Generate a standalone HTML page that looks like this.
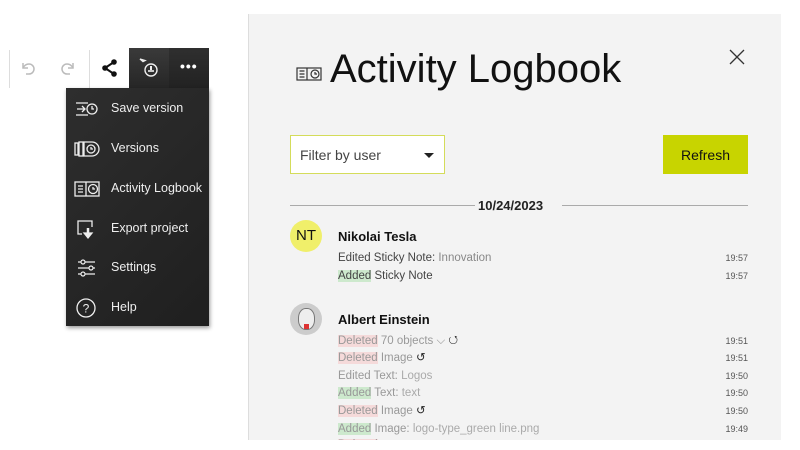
<!DOCTYPE html>
<html><head><meta charset="utf-8"><style>
*{margin:0;padding:0;box-sizing:border-box}
body{width:800px;height:450px;background:#fff;position:relative;overflow:hidden;font-family:"Liberation Sans",sans-serif}
.abs{position:absolute}
.sep{position:absolute;width:1px;background:#ddd}
.dark{position:absolute;background:linear-gradient(#3a3a3a,#262626)}
.menu{position:absolute;left:66px;top:88px;width:143px;height:238px;background:linear-gradient(135deg,#2e2e2e,#1f1f1f);box-shadow:1px 2px 4px rgba(0,0,0,.4)}
.mi{position:absolute;left:45px;color:#eee;font-size:12.5px;line-height:14px}
.ic{position:absolute;left:8px}
.panel{position:absolute;left:248px;top:14px;width:533px;height:426px;background:#f3f3f3;border-left:1px solid #ddd;overflow:hidden}
.t{position:absolute;font-size:11.5px;color:#444;white-space:nowrap;line-height:15px}
.ts{position:absolute;right:33px;font-size:9px;color:#555}
.g{background:#cde9cd}.r{background:#f5dada}
.fd{color:#999}.fd .k{color:#aaa}
</style></head><body>
<div class="sep" style="left:9px;top:50px;height:38px"></div>
<div class="sep" style="left:89px;top:50px;height:38px"></div>
<svg class="abs" style="left:18px;top:58px" width="20" height="20" viewBox="0 0 20 20" fill="none" stroke="#bbb" stroke-width="1.5"><path d="M5 5v5h5"/><path d="M5 10c1.5-3 4-4 6-4a5 5 0 0 1 0 10H8"/></svg>
<svg class="abs" style="left:58px;top:58px" width="20" height="20" viewBox="0 0 20 20" fill="none" stroke="#bbb" stroke-width="1.5"><path d="M15 5v5h-5"/><path d="M15 10c-1.5-3-4-4-6-4a5 5 0 0 0 0 10h3"/></svg>
<svg class="abs" style="left:100px;top:58px" width="20" height="20" viewBox="0 0 20 20"><path d="M14 4L5 10l9 6" stroke="#111" stroke-width="2" fill="none"/><circle cx="14" cy="4" r="2.8" fill="#111"/><circle cx="5" cy="10" r="2.8" fill="#111"/><circle cx="14" cy="16" r="2.8" fill="#111"/></svg>
<div class="dark" style="left:129px;top:48px;width:40px;height:40px"></div>
<div class="dark" style="left:169px;top:48px;width:40px;height:40px;background:linear-gradient(#2f2f2f,#222)"></div>
<svg class="abs" style="left:137px;top:56px" width="24" height="24" viewBox="0 0 24 24" fill="none" stroke="#eee" stroke-width="1.4"><path d="M3 3l5 1.5-2 1z" fill="#eee"/><circle cx="14" cy="14" r="6"/><path d="M14 10v4" stroke-width="2"/><path d="M11 15h6" stroke-width="1.6"/></svg>
<div class="abs" style="left:180px;top:58px;color:#fff;font-size:14px;font-weight:bold;letter-spacing:1px">•••</div>
<div class="menu">
 <svg class="ic" style="top:11px" width="26" height="20" viewBox="0 0 26 20" fill="none" stroke="#eee" stroke-width="1.3"><path d="M2 4h12M2 16h12"/><path d="M3 10h8M8 7l3 3-3 3"/><circle cx="18" cy="10" r="5"/><path d="M18 7v3h2"/></svg>
 <div class="mi" style="top:13px">Save version</div>
 <svg class="ic" style="top:51px" width="26" height="20" viewBox="0 0 26 20" fill="none" stroke="#eee" stroke-width="1.3"><rect x="1" y="4" width="3" height="12"/><rect x="5" y="3" width="4" height="14"/><path d="M10 3h8a6 6 0 0 1 0 14h-8z"/><circle cx="17" cy="10" r="4"/><path d="M17 8v2h2"/></svg>
 <div class="mi" style="top:53px">Versions</div>
 <svg class="ic" style="top:91px" width="28" height="20" viewBox="0 0 28 20" fill="none" stroke="#eee" stroke-width="1.3"><rect x="1" y="3" width="24" height="14"/><path d="M4 7h5M4 10h5M4 13h5M12 3v14"/><circle cx="19" cy="10" r="4.5"/><path d="M19 8v2h2"/></svg>
 <div class="mi" style="top:93px">Activity Logbook</div>
 <svg class="ic" style="top:130px" width="26" height="22" viewBox="0 0 26 22" fill="none" stroke="#eee" stroke-width="1.3"><path d="M8 16H4V3h14v6"/><path d="M14 10v8" stroke-width="2.5"/><path d="M10 15l4 5 4-5z" fill="#eee"/></svg>
 <div class="mi" style="top:133px">Export project</div>
 <svg class="ic" style="top:169px" width="26" height="22" viewBox="0 0 26 22" fill="none" stroke="#eee" stroke-width="1.2"><path d="M4 5h3M11 5h10M4 11h11M19 11h2M4 17h3M11 17h10"/><circle cx="9" cy="5" r="2"/><circle cx="17" cy="11" r="2"/><circle cx="9" cy="17" r="2"/></svg>
 <div class="mi" style="top:172px">Settings</div>
 <svg class="ic" style="top:208px" width="26" height="24" viewBox="0 0 26 24" fill="none" stroke="#eee" stroke-width="1.3"><circle cx="12" cy="12" r="9"/><text x="12" y="16.5" text-anchor="middle" fill="#eee" stroke="none" font-size="12" font-family="Liberation Sans">?</text></svg>
 <div class="mi" style="top:212px">Help</div>
</div>
<div class="panel">
 <svg class="abs" style="left:47px;top:52px" width="28" height="16" viewBox="0 0 28 16" fill="none" stroke="#333" stroke-width="1.2"><rect x="1" y="2" width="24" height="12"/><path d="M3.5 5h5M3.5 8h5M3.5 11h5M11 2v12"/><circle cx="19" cy="8" r="4"/><path d="M19 6v2h2"/></svg>
 <div class="abs" style="left:81px;top:33px;font-size:40px;color:#111">Activity Logbook</div>
 <svg class="abs" style="left:480px;top:35px" width="16" height="16" viewBox="0 0 16 16" stroke="#333" stroke-width="1.3"><path d="M1 1l14 14M15 1L1 15"/></svg>
 <div class="abs" style="left:41px;top:121px;width:155px;height:39px;background:#fff;border:1px solid #d4dc5a"></div>
 <div class="abs" style="left:51px;top:133px;font-size:14px;color:#444">Filter by user</div>
 <div class="abs" style="left:175px;top:139px;border-left:5px solid transparent;border-right:5px solid transparent;border-top:5px solid #222"></div>
 <div class="abs" style="left:414px;top:121px;width:85px;height:39px;background:#c8d400"></div>
 <div class="abs" style="left:414px;top:133px;width:85px;text-align:center;font-size:14px;color:#111">Refresh</div>
 <div class="abs" style="left:41px;top:191px;width:185px;height:1px;background:#aaa"></div>
 <div class="abs" style="left:313px;top:191px;width:186px;height:1px;background:#aaa"></div>
 <div class="abs" style="left:229px;top:184px;font-size:13px;font-weight:bold;color:#222">10/24/2023</div>
 <div class="abs" style="left:41px;top:206px;width:32px;height:32px;border-radius:50%;background:#f0ef6a;text-align:center;line-height:32px;font-size:15px;color:#111">NT</div>
 <div class="abs" style="left:89px;top:215px;font-size:13px;font-weight:bold;color:#111">Nikolai Tesla</div>
 <div class="t" style="left:89px;top:237px">Edited Sticky Note: <span style="color:#888">Innovation</span></div><div class="ts" style="top:239px">19:57</div>
 <div class="t" style="left:89px;top:255px"><span class="g">Added</span> Sticky Note</div><div class="ts" style="top:257px">19:57</div>
 <div class="abs" style="left:41px;top:289px;width:32px;height:32px;border-radius:50%;background:#ccc;overflow:hidden"><div style="position:absolute;left:8px;top:5px;width:17px;height:22px;border-radius:45%;background:#eee;border:1px solid #777"></div><div style="position:absolute;left:14px;top:21px;width:5px;height:5px;background:#d33"></div></div>
 <div class="abs" style="left:89px;top:298px;font-size:13px;font-weight:bold;color:#111">Albert Einstein</div>
 <div class="t fd" style="left:89px;top:320px"><span class="r">Deleted</span> 70 objects ⌵ <span style="color:#222">↺</span></div><div class="ts" style="top:322px">19:51</div>
 <div class="t fd" style="left:89px;top:337px"><span class="r">Deleted</span> Image <span style="color:#222">↺</span></div><div class="ts" style="top:339px">19:51</div>
 <div class="t fd" style="left:89px;top:355px">Edited Text: <span class="k">Logos</span></div><div class="ts" style="top:357px">19:50</div>
 <div class="t fd" style="left:89px;top:372px"><span class="g">Added</span> Text: <span class="k">text</span></div><div class="ts" style="top:374px">19:50</div>
 <div class="t fd" style="left:89px;top:390px"><span class="r">Deleted</span> Image <span style="color:#222">↺</span></div><div class="ts" style="top:392px">19:50</div>
 <div class="t fd" style="left:89px;top:408px"><span class="g">Added</span> Image: <span class="k">logo-type_green line.png</span></div><div class="ts" style="top:410px">19:49</div>
 <div class="t fd" style="left:89px;top:424px"><span class="r">Deleted</span></div>
</div>
</body></html>
